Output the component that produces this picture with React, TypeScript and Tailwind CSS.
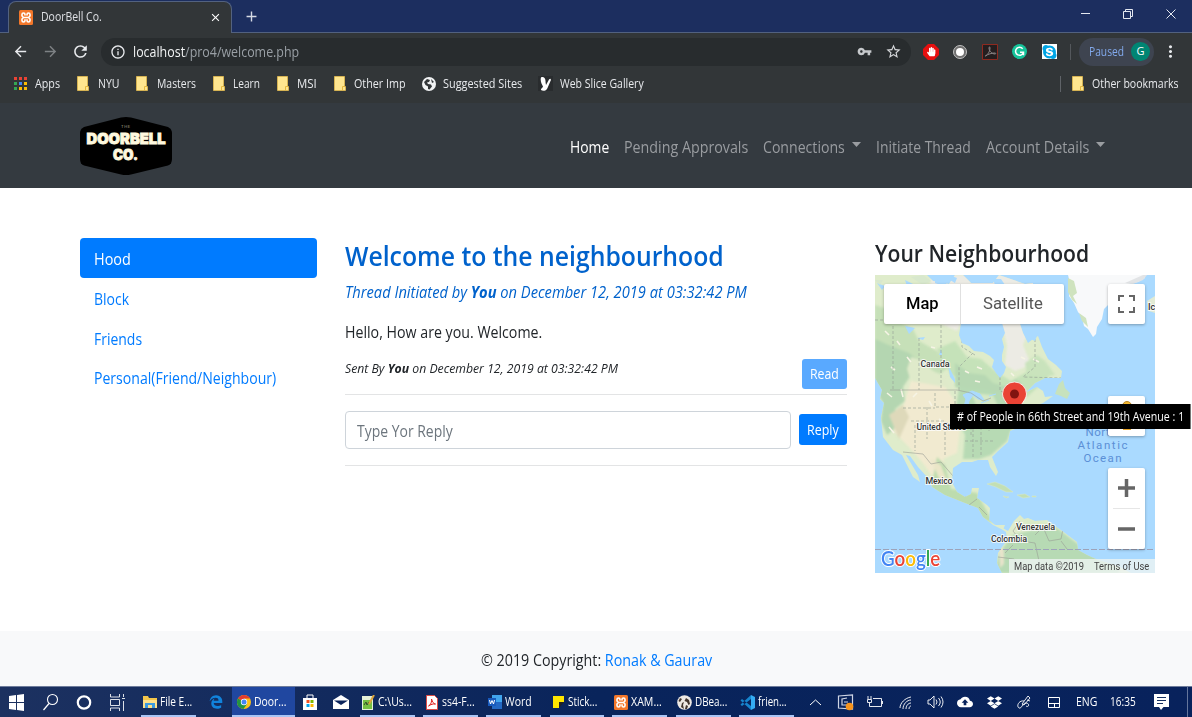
import { useLayoutEffect, useRef, useState } from "react";
import type { ReactNode } from "react";
import {
  MdArrowBack,
  MdArrowForward,
  MdRefresh,
  MdInfoOutline,
  MdVpnKey,
  MdStarBorder,
  MdMoreVert,
  MdClose,
  MdAdd,
  MdCloudUpload,
} from "react-icons/md";
import { FaDropbox, FaEdgeLegacy, FaHandPaper, FaSkype } from "react-icons/fa";

/* Condenses or widens a single line of text so that it fills its box. */
function Fit({ className, children }: { className: string; children: ReactNode }) {
  const box = useRef<HTMLSpanElement>(null);
  const inner = useRef<HTMLSpanElement>(null);
  const [scale, setScale] = useState(1);
  useLayoutEffect(() => {
    if (box.current && inner.current && inner.current.offsetWidth) {
      setScale(box.current.offsetWidth / inner.current.offsetWidth);
    }
  }, []);
  return (
    <span ref={box} className={"block shrink-0 whitespace-nowrap " + className}>
      <span ref={inner} className="inline-block origin-left" style={{ transform: `scaleX(${scale})` }}>
        {children}
      </span>
    </span>
  );
}

function XamppIcon() {
  return (
    <svg className="h-[15px] w-[14px] shrink-0" viewBox="0 0 14 15">
      <rect width="14" height="15" rx="1.500" fill="#f3772a" />
      <path
        d="M6 5.500V4.500A1.500 1.500 0 0 0 3 4.500V6L4.500 7.500 3 9v1.500a1.500 1.500 0 0 0 3 0V9.200M8 5.500V4.500a1.500 1.500 0 0 1 3 0V6L9.500 7.500 11 9v1.500a1.500 1.500 0 0 1-3 0V9.200M4.500 7.500h5"
        fill="none"
        stroke="#fff"
        strokeWidth="1.600"
        strokeLinejoin="round"
      />
    </svg>
  );
}

function Folder() {
  return (
    <svg className="h-[15px] w-3 shrink-0" viewBox="0 0 12 15">
      <path d="M.5.5h10v10h1v4H.5z" fill="#ffe68f" stroke="#e6bd4f" strokeWidth=".8" />
      <path d="M8.500 14v-3.500H11" fill="none" stroke="#e6b93f" strokeWidth="1" />
    </svg>
  );
}

function TitleBar() {
  return (
    <div className="flex h-[33px] shrink-0 bg-[#1c2e5f] shadow-[inset_0_-1px_0_#52617f]">
      <div className="ml-2 mt-px flex w-56 items-center rounded-t-lg border border-b-0 border-[#53627f] bg-[#323638] pb-px pl-[10px] text-[#dfe1e5]">
        <XamppIcon />
        <Fit className="ml-2 w-[61px] text-[12px]">DoorBell Co.</Fit>
        <MdClose className="ml-[107px] shrink-0 text-white" size={13} />
      </div>
      <MdAdd className="ml-[11px] mt-2 text-[#d5dae4]" size={17} />
      <svg className="ml-auto mr-[13px] h-7 w-[104px]" viewBox="0 0 104 28" fill="none" stroke="#e4e8f0">
        <path d="M6 13.500h9M48.500 11.500h7v7h-7zM50.500 11V9.500h7v7H56M91.500 9.500l9 9M100.500 9.500l-9 9" />
      </svg>
    </div>
  );
}

function Toolbar() {
  return (
    <div className="flex h-[37px] shrink-0 items-center bg-[#323638] text-[#e8eaed]">
      <MdArrowBack className="ml-[12px]" size={17} />
      <MdArrowForward className="ml-[13px] text-[#7e8285]" size={17} />
      <MdRefresh className="ml-[12px]" size={19} />
      <div className="ml-[11px] flex h-7 w-[810px] items-center rounded-full bg-[#282c2e] pl-[9px]">
        <MdInfoOutline size={16} />
        <Fit className="ml-[7px] w-[166px] text-[14px] text-[#9aa0a6]">
          <span className="text-[#f1f3f4]">localhost</span>/pro4/welcome.php
        </Fit>
        <MdVpnKey className="ml-[558px] text-[#c6c9cc]" size={15} />
        <MdStarBorder className="ml-[13px] text-[#d5d7da]" size={17} />
      </div>
      <svg className="ml-[12px] size-[16px]" viewBox="0 0 16 16">
        <path d="M5 0h6l5 5v6l-5 5H5l-5-5V5z" fill="#e60f0f" />
        <FaHandPaper x={3.5} y={3} size={9.5} color="white" />
      </svg>
      <span className="ml-[14px] flex size-[14px] items-center justify-center rounded-full border border-[#c0c0c0] bg-[#6f6f6f]">
        <span className="size-[8px] rounded-full bg-white" />
      </span>
      <svg className="ml-[15px] size-4" viewBox="0 0 16 16" fill="none">
        <path d="M.5.5h15v15H.5z" fill="#241e1f" stroke="#8e2a20" />
        <path d="M3 12c2-.5 5-4 5-8 0-1.500-1-1.500-1 0 0 3 3 6 6 6 1 0 1-1 0-1-3 0-7 1-9.500 3" stroke="#8b8586" />
      </svg>
      <span className="ml-[14px] flex size-[15px] items-center justify-center rounded-full bg-[#15c39a]">
        <svg className="size-[11px]" viewBox="0 0 11 11" fill="none" stroke="white" strokeWidth="1.500">
          <path d="M8.700 2.800A4 4 0 1 0 9.500 6.200M6 6.200h3.500v3" />
        </svg>
      </span>
      <span className="ml-[15px] flex size-[15px] items-center justify-center bg-white text-[#00a5e5]">
        <FaSkype size={16} />
      </span>
      <span className="ml-[13px] h-4 w-px bg-[#54585c]" />
      <div className="ml-2 flex h-[28px] w-[75px] items-center rounded-full bg-[#3e4450] pl-[10px] text-[12px] text-[#82a9ec]">
        <Fit className="w-[35px]">Paused</Fit>
        <span className="ml-[7px] flex size-[19px] items-center justify-center rounded-full bg-[#008573] text-[11px] text-white">
          G
        </span>
      </div>
      <MdMoreVert className="ml-[7px] shrink-0" size={19} />
    </div>
  );
}

const appDots = ["#ea4335", "#ea4335", "#ea4335", "#34a853", "#4285f4", "#fbbc05", "#34a853", "#fbbc05", "#fbbc05"];

function Bookmarks() {
  return (
    <div className="flex h-[33px] shrink-0 items-center bg-[#323638] pb-1.5 text-[12px] text-[#e8eaed]">
      <svg className="ml-[14px] size-[13px] shrink-0" viewBox="0 0 13 13">
        {appDots.map((c, i) => (
          <rect key={i} x={(i % 3) * 5} y={Math.floor(i / 3) * 5} width="3" height="3" fill={c} />
        ))}
      </svg>
      <Fit className="ml-2 mr-[17px] w-[25px]">Apps</Fit>
      <Folder />
      <Fit className="ml-[9px] mr-[16px] w-[22px]">NYU</Fit>
      <Folder />
      <Fit className="ml-[9px] mr-[17px] w-[39px]">Masters</Fit>
      <Folder />
      <Fit className="ml-2 mr-[17px] w-[27px]">Learn</Fit>
      <Folder />
      <Fit className="ml-2 mr-[17px] w-[20px]">MSI</Fit>
      <Folder />
      <Fit className="ml-2 mr-[16px] w-[52px]">Other Imp</Fit>
      <svg className="size-[14px] shrink-0" viewBox="0 0 14 14">
        <circle cx="7" cy="7" r="7" fill="#f1f3f4" />
        <path d="M2 5l3-3 3 1-1 2-2 .5 1 1.500 3 .5 1 2-2.500 3L6 12V9.500L3.500 8z" fill="#323638" />
        <path d="M9 2l3 3-2 1z" fill="#323638" />
      </svg>
      <Fit className="ml-[7px] mr-4 w-[79px]">Suggested Sites</Fit>
      <svg className="size-[15px] shrink-0" viewBox="0 0 15 15">
        <path d="M0 0h15v15H0z" fill="#292c2e" />
        <path d="M3 1.500C5 0 8 2 7.500 6L8 9l3-5.500c1.500-2 2.500 0 1.500 1.500L9.500 12c-1 3-5 3.500-6.500 2-.5-1.500 2-2.500 2-3.500C3.500 8 2 4.500 3 1.500z" fill="#fff" />
      </svg>
      <Fit className="ml-[7px] w-[84px]">Web Slice Gallery</Fit>
      <span className="ml-auto h-4 w-px bg-[#5f6368]" />
      <span className="ml-[11px]">
        <Folder />
      </span>
      <Fit className="ml-2 mr-[13px] w-[87px]">Other bookmarks</Fit>
    </div>
  );
}

function Caret() {
  return (
    <svg className="mb-1 h-[5px] w-[9px]" viewBox="0 0 9 5">
      <path d="M0 0h9L4.500 5z" fill="#9a9da1" />
    </svg>
  );
}

function SiteNav() {
  return (
    <div className="flex h-[85px] shrink-0 items-center bg-[#343a40] text-[16px] text-[#999ca0]">
      <svg className="ml-[79px] h-[60px] w-[94px]" viewBox="0 0 94 60">
        <path
          d="M5 11 42 1.500Q47 .5 52 1.500L89 11Q93 13 93 17V43Q93 48 89 49.500L52 58.500Q47 59.500 42 58.500L5 49.500Q1 48 1 43V17Q1 13 5 11z"
          fill="#000"
        />
        <g fill="#fff9df" textAnchor="middle" className="font-[Inter,sans-serif]">
          <text x="47" y="12" fontSize="4" letterSpacing=".6" fill="#aaa78f">THE</text>
          <text x="47" y="28" fontSize="14.500" fontWeight="900" textLength="79" lengthAdjust="spacingAndGlyphs" stroke="#fff9df" strokeWidth=".8">DOORBELL</text>
          <text x="46.500" y="44" fontSize="14.500" fontWeight="900" textLength="25" lengthAdjust="spacingAndGlyphs" stroke="#fff9df" strokeWidth=".8">CO.</text>
        </g>
      </svg>
      <nav className="ml-auto mr-[87px] flex items-center gap-[15px] pt-0.5">
        <Fit className="w-[39px] text-white">Home</Fit>
        <Fit className="w-[124px]">Pending Approvals</Fit>
        <span className="flex items-center gap-[7px]">
          <Fit className="w-[82px]">Connections</Fit>
          <Caret />
        </span>
        <Fit className="w-[95px]">Initiate Thread</Fit>
        <span className="flex items-center gap-[7px]">
          <Fit className="w-[103px]">Account Details</Fit>
          <Caret />
        </span>
      </nav>
    </div>
  );
}

function Sidebar() {
  return (
    <div className="flex w-[237px] flex-col text-[16px] text-[#007bff]">
      <div className="flex h-10 items-center rounded-[4px] bg-[#007bff] pl-[14px] pt-px text-white">
        <Fit className="w-[37px]">Hood</Fit>
      </div>
      <div className="flex h-10 items-center pl-[14px] pt-px">
        <Fit className="w-[35px]">Block</Fit>
      </div>
      <div className="flex h-10 items-center pl-[14px] pt-0.5">
        <Fit className="w-[48px]">Friends</Fit>
      </div>
      <div className="flex h-10 items-center pl-[14px]">
        <Fit className="w-[182px]">Personal(Friend/Neighbour)</Fit>
      </div>
    </div>
  );
}

function Thread() {
  return (
    <div className="flex w-[502px] flex-col text-[#212529]">
      <Fit className="h-9 w-[379px] text-[27px] font-[550] leading-9 text-[#0062cc]">
        Welcome to the neighbourhood
      </Fit>
      <Fit className="mt-[6px] h-6 w-[402px] text-[15.500px] italic leading-6 text-[#0062cc]">
        Thread Initiated by <b>You</b> on December 12, 2019 at 03:32:42 PM
      </Fit>
      <Fit className="mt-4 h-6 w-[197px] text-[15.500px] leading-6">Hello, How are you. Welcome.</Fit>
      <div className="mt-[15px] flex h-[30px] justify-between">
        <Fit className="h-5 w-[273px] text-[12.500px] italic leading-5">
          Sent By <b>You</b> on December 12, 2019 at 03:32:42 PM
        </Fit>
        <button className="flex h-[30px] w-[45px] items-center justify-center rounded-[3px] bg-[#59a9ff] text-[14px] leading-5 text-white">
          <Fit className="mb-px w-[29px]">Read</Fit>
        </button>
      </div>
      <div className="mt-[5px] h-px bg-[#e3e4e5]" />
      <div className="mt-4 flex items-center justify-between">
        <div className="flex h-[38px] w-[446px] items-center rounded-[4px] border border-[#ced4da] pl-[11px] pt-0.5 text-[16px] text-[#6c757d]">
          <Fit className="w-[96px]">Type Yor Reply</Fit>
        </div>
        <button className="mb-px flex h-[31px] w-12 items-center justify-center rounded-[3px] bg-[#007bff] text-[14px] text-white">
          <Fit className="w-[32px]">Reply</Fit>
        </button>
      </div>
      <div className="mt-4 h-px bg-[#e3e4e5]" />
    </div>
  );
}

const northAmerica =
  "M0 0H52L58 6 74 9 80 0H88L96 8H118L124 0 150 9 158 8V49H145L148 58 153 68 158 64 163 61 167 72 173 84 181 90 187 96 186 103 170 103 160 108 150 118 162 112 168 116 170 122 178 121 168 128 158 132 148 143 140 154 135 156 133 167 123 176 117 182 123 197 121 201 115 192 113 185 103 185 97 187 87 187 78 193 77 207 82 217 90 222 96 219 97 213 104 213 102 223 112 230 115 233 114 245 120 250 130 250 128 255 118 250 108 242 103 233 90 228 70 220 57 212 53 203 43 192 35 181 31 180 43 200 45 207 38 202 27 180 18 175 8 162 6 142 9 128 5 124 7 115 0 103z";
const southAmerica =
  "M118 249 126 252 133 256 139 246 145 240 149 244 153 243 160 246 172 245 183 253 190 258 202 267 203 275 212 280 223 285 243 291 256 298H127L122 288 123 278 132 265 131 257z";

function MapDrawing() {
  return (
    <svg className="block h-[298px] w-[280px]" viewBox="0 0 280 298">
      <defs>
        <clipPath id="land">
          <path d={northAmerica} />
          <path d={southAmerica} />
        </clipPath>
      </defs>
      <rect width="280" height="298" fill="#aadaff" />
      <g clipPath="url(#land)">
        <rect width="280" height="298" fill="#dfeccb" />
        <g className="blur-[0.8px]">
          <path d="M56 0h104v60l-2 4-6-4-4 10 8 20-16 6-10-6 2-20-4-16-42-6-4 8-18-8-10-16z" fill="#ecebe4" />
          <path d="M0 50l10 6 8 8 8 2 10 8 8 14 8 6-2 8-14-2-8 12 2 14-10 8 4 16-12 10-6-14 2-18-8-14z" fill="#b4d6b1" />
          <path d="M0 30l18 6 8 12 12 6 6 12 18 10 12 16-10 8-14-8-16-14-16-6-18-8z" fill="#c6e0b8" />
          <path d="M62 74l18-8 12 16 14 2 14 12 16 10 14-8 12-6 12 10-22 20-20-4-20-2-20-10-16-6z" fill="#c5e2b9" />
          <path d="M80 88l14 10 16 2 8 8 14 4 8-8 6 4-4 18-22-4-22-4-18-6z" fill="#b7d8b3" />
          <path d="M84 112 110 114 140 120 138 150 132 166 116 180 104 184 88 184 90 160 80 140z" fill="#b7dab4" />
          <path d="M150 88l12-8 8 6 10 14-12 2-16-2z" fill="#c9e3bc" />
          <path d="M96 118l22 2 8 18-18 8z" fill="#d5e8c5" />
          <path d="M36 82l12 4 10 10 14 6 6 12-40 0-6-20z" fill="#dfeaca" />
          <path d="M36 106 70 112 80 126 86 146 82 178 68 184 76 210 62 208 48 188 32 170 18 156 28 132z" fill="#f1ead0" />
          <path d="M14 140l14-10 6 12-10 22z" fill="#ded9ba" />
          <path d="M62 182l8 8 6 24 26 4 16 30-16-6-30-16-16-12z" fill="#bddcae" />
          <path d="M56 184l10 6 6 16-8-2z" fill="#ebe6c8" />
          <path d="M120 298l4-20 14-18 40-10 26 20 40 24v4z" fill="#b7dab4" />
          <path d="M146 244l24 3 8 6-20 3z" fill="#d9eac5" />
          <path d="M124 270l5 5 0 14-4 4z" fill="#e8e4cb" />
        </g>
        <path d="M44 14l12 4-8 12zM30 51l10 2-6 6zM42 63l8-1-2 3zM14 44l8-4 2 8zM73 90l3 6 4 8 0 4-5-6zM2 8l8 3-3 4zM104 0h14l-4 7zM60 2l14 4-6 3zM64 80l2-6 1 6z" fill="#aadaff" />
        <path d="M10 56l4 4M22 66l3 4M32 82l4 5M16 92l4 3M26 114l2 8M12 118l5 4M56 72l4 1M102 92l5 2M146 82l4 2M158 84l6 3M14 152l5 6M54 126l3 5M38 122l4-4M64 144l4 3M104 130l4 4M118 144l5-5M90 96l4 2M100 106l5 1M136 98l3 3" stroke="#f6f4e5" strokeWidth="1.600" />
        <path d="M88 120l9-4 8 3 4 6-6-1-5-4-4 6-2 8-3-2 2-8zM106 128l8-3M114 121l7-2" fill="#aadaff" stroke="#aadaff" />
        <g fill="none" stroke="#9aa59a" strokeWidth=".7" strokeDasharray="3 2">
          <path d="M0 45h84M18 46v70M44 63v52M66 50v65M87 50v22l13 8M98 78l-14 14v24M125 102v14l20 6M160 64v28l-12 10 38 1M80 116v30M60 118v14h20M36 146h34v34M28 133h32M40 150v26M52 132v32M70 148h26v14M90 166h28M98 144v40M106 152v30M114 130v26M14 10v34" />
        </g>
        <g fill="none" stroke="#999b95" strokeWidth=".9" opacity=".65">
          <path d="M15 115h67l14 3 12 8 8-3M28 177l20 2 8 10 10-2 12 14M90 222l5-7M102 224l-8 6M112 240l-8-8M145 246l-7 10 8 10 14 2 4 18M160 260l8-8 6 14 12-2 2-10M186 266l6 8M123 282l16 2 8 14M138 270l-8 8" />
        </g>
      </g>
      <path d="M86 48 84 60 87 68 94 71 99 76 108 77 115 81 119 85 117 92 121 98 125 103 129 98 131 92 127 86 127 80 129 72 127 64 130 58 127 48zM151 49l2 8 0 6 7 3 3-8 2-3-4-6z" fill="#aadaff" />
      <path d="M0 5h8l-3 5zM36 2l12-2 8 6-8 4zM92 3l20 5" fill="#d8e8cd" />
      <path d="M30 5l8 4-6 2zM60 4l12 4-4 3-8-3zM74 0l8 3-2 5-5-3zM118 4l8 0 4 6h-10z" fill="#aadaff" />
      <path d="M180 119 184 109 188 105 190 113 195 118 192 124 186 121z" fill="#c7e2bd" />
      <path d="M112 209 120 207 130 211 138 217 131 217 121 212zM142 220l8-1 5 3-7 1zM128 221l6 1-3 1zM157 221h4v1h-4z" fill="#c3dfb4" stroke="#d9e8c6" strokeWidth=".5" />
      <path d="M193 0 195 8 194 21 199 28 203 37 207 42 209 51 213 54 218 62 221 59 222 52 227 44 229 34 235 28 239 18 248 14 254 9 263 7 270 3V0z" fill="#f8f9fa" />
      <path d="M193 3l6 3 3 12-4 3 4 8-5-4-4-8zM204 38l7 5 2 9-6-6z" fill="#cfe3be" />
      <path d="M250 8l18-8h4l-4 5-10 4z" fill="#e2e4e6" />
      <path d="M272 26l8-5v17l-6-2z" fill="#e2ebd5" />
      <path d="M0 274.500h280" stroke="#9da3ba" strokeWidth="1" strokeDasharray="6 2" />
      <g className="font-[Roboto,sans-serif]" fontSize="9" fontWeight="500" fill="#333" stroke="#fff" strokeWidth="2" paintOrder="stroke" strokeOpacity=".8">
        <text x="45.500" y="92" textLength="29">Canada</text>
        <text x="41.500" y="155" textLength="50">United States</text>
        <text x="50.500" y="208.500" textLength="27">Mexico</text>
        <text x="141" y="254.500" textLength="39">Venezuela</text>
        <text x="116" y="267" textLength="36">Colombia</text>
        <text x="273" y="34.500">Ic</text>
      </g>
      <g className="font-[Roboto,sans-serif]" fontSize="11.500" fill="#5b8fd6">
        <text x="210.500" y="161" textLength="31">North</text>
        <text x="202.500" y="173.500" textLength="50">Atlantic</text>
        <text x="208.500" y="186.500" textLength="38">Ocean</text>
      </g>
      <path d="M139.500 107a12 12 0 0 1 12 12c0 8-12 14-12 28 0-14-12-20-12-28a12 12 0 0 1 12-12z" fill="#ea4335" stroke="#fff" strokeWidth=".8" />
      <circle cx="139.500" cy="119" r="4.500" fill="#811411" />
    </svg>
  );
}

function Neighbourhood() {
  return (
    <div className="w-[280px]">
      <Fit className="h-[37px] w-[214px] text-[23px] font-[550] leading-[31px] text-[#212529]">Your Neighbourhood</Fit>
      <div className="relative h-[298px] font-[Roboto,sans-serif]">
        <MapDrawing />
        <div className="absolute left-[9px] top-[9px] flex h-10 w-[180px] rounded-[2px] bg-white text-[17px] shadow-[0_1px_3px_rgba(0,0,0,0.3)]">
          <div className="flex w-[77px] items-center justify-center border-r border-[#e0e0e0] font-medium text-black">
            <Fit className="w-[33px]">Map</Fit>
          </div>
          <div className="flex grow items-center justify-center text-[#565656]">
            <Fit className="w-[60px]">Satellite</Fit>
          </div>
        </div>
        <div className="absolute left-[233px] top-[9px] flex h-10 w-[37px] items-center justify-center rounded-[2px] bg-white shadow-[0_1px_3px_rgba(0,0,0,0.3)]">
          <svg className="h-[18px] w-[17px]" viewBox="0 0 17 18" fill="none" stroke="#666" strokeWidth="2">
            <path d="M1 6V1h5M11 1h5v5M16 12v5h-5M6 17H1v-5" />
          </svg>
        </div>
        <div className="absolute left-[233px] top-[121px] flex h-10 w-[37px] items-center justify-center rounded-[2px] bg-white shadow-[0_1px_3px_rgba(0,0,0,0.3)]">
          <svg className="h-[30px] w-4" viewBox="0 0 16 30">
            <circle cx="8" cy="5" r="4.500" fill="#f5b82e" stroke="#b78528" />
            <path d="M4 12h8v17H4z" fill="#e8a52a" />
          </svg>
        </div>
        <div className="absolute left-[233px] top-[193px] h-[81px] w-[37px] rounded-[2px] bg-white shadow-[0_1px_3px_rgba(0,0,0,0.3)]">
          <svg className="h-[81px] w-[37px]" viewBox="0 0 37 81">
            <path d="M10 20h17M18.500 11v18M10 61h17" stroke="#666" strokeWidth="3.500" />
            <path d="M5 40.500h27" stroke="#e6e6e6" />
          </svg>
        </div>
        <div className="absolute bottom-[2px] left-0 flex h-[27px] items-center pl-[6px] font-[Lato,sans-serif] text-[21px] font-semibold [paint-order:stroke] [-webkit-text-stroke:2px_white]">
          <Fit className="w-[59px]">
            <span className="text-[#4285f4]">G</span>
            <span className="text-[#ea4335]">o</span>
            <span className="text-[#fbbc05]">o</span>
            <span className="text-[#4285f4]">g</span>
            <span className="text-[#34a853]">l</span>
            <span className="text-[#ea4335]">e</span>
          </Fit>
        </div>
        <div className="absolute bottom-0 right-0 flex h-[14px] w-[146px] items-center bg-[#eef4f3]/80 pl-[5px] text-[10px] text-[#444]">
          <Fit className="w-[70px]">Map data ©2019</Fit>
          <Fit className="ml-[10px] w-[55px]">Terms of Use</Fit>
        </div>
        <div className="absolute left-[75px] top-[129px] flex h-[25px] w-[241px] items-center border-r border-[#777] bg-black pl-[7px] font-['Open_Sans',sans-serif] text-[12px] text-white">
          <Fit className="w-[227px]"># of People in 66th Street and 19th Avenue : 1</Fit>
        </div>
      </div>
    </div>
  );
}

function Task({ icon, label, className, text }: { icon: ReactNode; label: string; className: string; text: string }) {
  return (
    <div className={"flex h-full shrink-0 items-center border-b-2 border-[#a9c5f5] pt-0.5 " + className}>
      {icon}
      <Fit className={text}>{label}</Fit>
    </div>
  );
}

function Taskbar() {
  return (
    <div className="flex h-[31px] shrink-0 items-center border-t border-[#6e7c9b] bg-gradient-to-r from-[#1c3160] via-[#09245b] to-[#08225c] text-[12px] text-white">
      <svg className="h-[30px] w-[141px] shrink-0" viewBox="0 0 141 30" fill="none" stroke="white">
        <path d="M9 9l7-1v7H9zM17 8l7-1v8h-7zM9 16h7v7l-7-1zM17 16h7v8l-7-1z" fill="white" stroke="none" />
        <circle cx="52.500" cy="12.500" r="5" strokeWidth="1.100" />
        <path d="M49 16.500L43.500 23" strokeWidth="1.200" />
        <circle cx="84" cy="15.500" r="6.200" strokeWidth="2.200" />
        <path d="M110.500 7v3h9V7M110.500 24v-3h9v3M110.500 12.500h9v6h-9zM123.500 7v3M123.500 14v10M122 11.500h3" opacity=".85" />
      </svg>
      <Task
        className="w-[55px] pl-0.5"
        text="ml-[3px] w-[32px]"
        label="File E..."
        icon={
          <svg className="h-3 w-[14px]" viewBox="0 0 14 12">
            <path d="M0 0h5l1 2h8v10H0z" fill="#f4c64b" />
            <path d="M0 4h14v8H0z" fill="#ffe08a" />
            <path d="M2 12V7h10v5H9V9H5v3z" fill="#3d9be0" />
          </svg>
        }
      />
      <FaEdgeLegacy className="ml-[13px] shrink-0 text-[#1183dc]" size={14} />
      <Task
        className="ml-[9px] w-[63px] bg-[#2047a0] pl-[5px]"
        text="ml-[3px] w-[33px]"
        label="Door..."
        icon={
          <svg className="size-[14px]" viewBox="0 0 14 14">
            <circle cx="7" cy="7" r="7" fill="#fbc116" />
            <path d="M7 7L1 3.400A7 7 0 0 1 13 3.500H7z" fill="#e33b2e" />
            <path d="M7 7L1 3.400A7 7 0 0 0 6.500 14L10 9z" fill="#229342" />
            <circle cx="7" cy="7" r="3.200" fill="#fff" />
            <circle cx="7" cy="7" r="2.500" fill="#4285f4" />
          </svg>
        }
      />
      <svg className="ml-2 h-[30px] w-[57px] shrink-0" viewBox="0 0 57 30">
        <path d="M0 11h14v12H0z" fill="#fff" />
        <path d="M4 11V8h6v3" fill="none" stroke="#fff" />
        <path d="M3.500 13h3v3h-3z" fill="#f25022" />
        <path d="M7.500 13h3v3h-3z" fill="#7fba00" />
        <path d="M3.500 17h3v3h-3z" fill="#00a4ef" />
        <path d="M7.500 17h3v3h-3z" fill="#ffb900" />
        <path d="M30 13l8-5 8 5v9H30z" fill="#fff" />
        <path d="M31 13.500h14l-7 4.500z" fill="#0b245c" />
      </svg>
      <Task
        className="w-[55px] pl-0.5"
        text="ml-[3px] w-[34px]"
        label="C:\Us..."
        icon={
          <svg className="h-[15px] w-[13px]" viewBox="0 0 13 15">
            <path d="M0 1h11v14H0z" fill="#e6f2d8" />
            <path d="M1 5h9v9H1z" fill="#76c043" />
            <path d="M2 10l2-3 1 3 2-3" fill="none" stroke="#354e2a" />
            <path d="M12 0L7 9" stroke="#dca43c" strokeWidth="2" />
          </svg>
        }
      />
      <Task
        className="ml-2 w-[55px] pl-[3px]"
        text="ml-[4px] w-[33px]"
        label="ss4-F..."
        icon={
          <svg className="h-[15px] w-3" viewBox="0 0 12 15">
            <path d="M.5.5h8l3 3v11H.5z" fill="#fff" stroke="#dd4b45" />
            <path d="M2.500 11C5 10 6 6 5.500 4c1 3 2 5 4 5-2-.5-5 .5-7 2z" fill="none" stroke="#e02020" />
          </svg>
        }
      />
      <Task
        className="ml-2 w-[55px] pl-0.5"
        text="ml-[3px] w-[27px]"
        label="Word"
        icon={
          <svg className="h-[14px] w-[14px]" viewBox="0 0 14 14">
            <path d="M4 0h10v14H4z" fill="#41a5ee" />
            <path d="M4 7h10v7H4z" fill="#2368c4" />
            <path d="M0 3h8v8H0z" fill="#185abd" />
            <path d="M1.500 5l1 4L4 5.500 5.500 9l1-4" fill="none" stroke="#fff" />
          </svg>
        }
      />
      <Task
        className="ml-[9px] w-[54px] pl-[3px]"
        text="ml-[4px] w-[29px]"
        label="Stick..."
        icon={
          <svg className="h-3 w-[11px]" viewBox="0 0 11 12">
            <path d="M0 0h11v6H6v6H0z" fill="#ffe600" />
            <path d="M6 6h5l-5 6z" fill="#222" />
          </svg>
        }
      />
      <Task className="ml-2 w-[55px] pl-0.5" text="ml-[3px] w-[31px]" label="XAM..." icon={<XamppIcon />} />
      <Task
        className="ml-[9px] w-[55px] pl-px"
        text="ml-[3px] w-[32px]"
        label="DBea..."
        icon={
          <svg className="size-[15px]" viewBox="0 0 15 15">
            <circle cx="7.500" cy="7.500" r="7.300" fill="#eee9e4" />
            <path d="M1.500 6l1.500-3 2 1-2 3zM9 3l3 2 1 4-1.500 1L10 7 7.500 6zM5 8l2-1-1 3 1 4-3-2zM9 10l2 1-1 3H8z" fill="#43362e" />
          </svg>
        }
      />
      <Task
        className="ml-2 w-[55px] pl-px"
        text="ml-[3px] w-[29px]"
        label="frien..."
        icon={
          <svg className="size-[15px]" viewBox="0 0 15 15">
            <path d="M11 0l4 2v11l-4 2z" fill="#35abf2" />
            <path d="M11 0v4L2 11 .5 9.500zM11 15v-4L2 4 .5 5.500z" fill="#1684cd" />
          </svg>
        }
      />
      <svg className="ml-4 h-[30px] w-[137px] shrink-0" viewBox="810 0 137 30" fill="none" stroke="#fff">
        <path d="M810 18l5.500-5 5.500 5" />
        <path d="M838.500 9l14-1v14l-14-1zM847 11l-5 1v6h5M844 15h4" stroke="#cfd6e5" strokeWidth="1.200" />
        <circle cx="849.500" cy="19.500" r="3.800" fill="#f7941d" stroke="none" />
        <path d="M873 11.500h8.500v8H871M882.500 14v3M868 9v3M871 9v3M867.500 12.500h4v3h-4zM869.500 16v3.500h2" strokeWidth=".9" />
        <path d="M900 21c0-5 5-10 11-11M903 22c0-5 4-9 8-9M906 22c0-3 2-6 5-6M909 22c0-2 1-3 2-3" strokeWidth=".9" />
        <path d="M928 13h2l4-4v12l-4-4h-2zM936 12.500q2 2.500 0 5M938.500 11q3.500 4 0 8M941 9.500q4 5.500 0 11" strokeWidth=".9" />
      </svg>
      <MdCloudUpload className="ml-[10px] shrink-0" size={16} />
      <FaDropbox className="ml-[14px] shrink-0" size={15} />
      <svg className="ml-[14px] h-[30px] w-[46px] shrink-0" viewBox="1016 0 46 30" fill="none" stroke="#fff">
        <path d="M1022 17l6-8 2 2-6 7zM1024 14c-5-1-8 5-5 7 3 1 3-5 7-5s3 5 0 3M1027 13l3 1" strokeWidth=".9" />
        <path d="M1048.500 10.500h11v10h-11zM1048 16.500h12M1054.500 17v3.500" />
      </svg>
      <Fit className="ml-[14px] w-[21px]">ENG</Fit>
      <Fit className="ml-[13px] w-[26px]">16:35</Fit>
      <svg className="ml-[18px] h-[17px] w-[15px] shrink-0" viewBox="0 0 15 17">
        <path d="M0 0h15v13H9.500L7 16 5 13H0z" fill="#fff" />
        <path d="M3 3.500h9M3 6.500h9M3 9.500h6" stroke="#173060" />
      </svg>
      <span className="ml-auto mr-1 h-full w-px bg-[#65769c]" />
    </div>
  );
}

export default function App() {
  return (
    <div className="flex h-[717px] w-[1192px] flex-col overflow-hidden bg-white font-['Open_Sans',sans-serif]">
      <TitleBar />
      <Toolbar />
      <Bookmarks />
      <SiteNav />
      <main className="flex grow gap-7 pl-20 pt-[50px]">
        <Sidebar />
        <Thread />
        <Neighbourhood />
      </main>
      <footer className="flex h-[55px] shrink-0 items-center justify-center bg-[#f8f9fa] pt-0.5 text-[16px] text-[#212529]">
        <Fit className="w-[231px]">
          © 2019 Copyright: <span className="text-[#007bff]">Ronak &amp; Gaurav</span>
        </Fit>
      </footer>
      <Taskbar />
    </div>
  );
}
